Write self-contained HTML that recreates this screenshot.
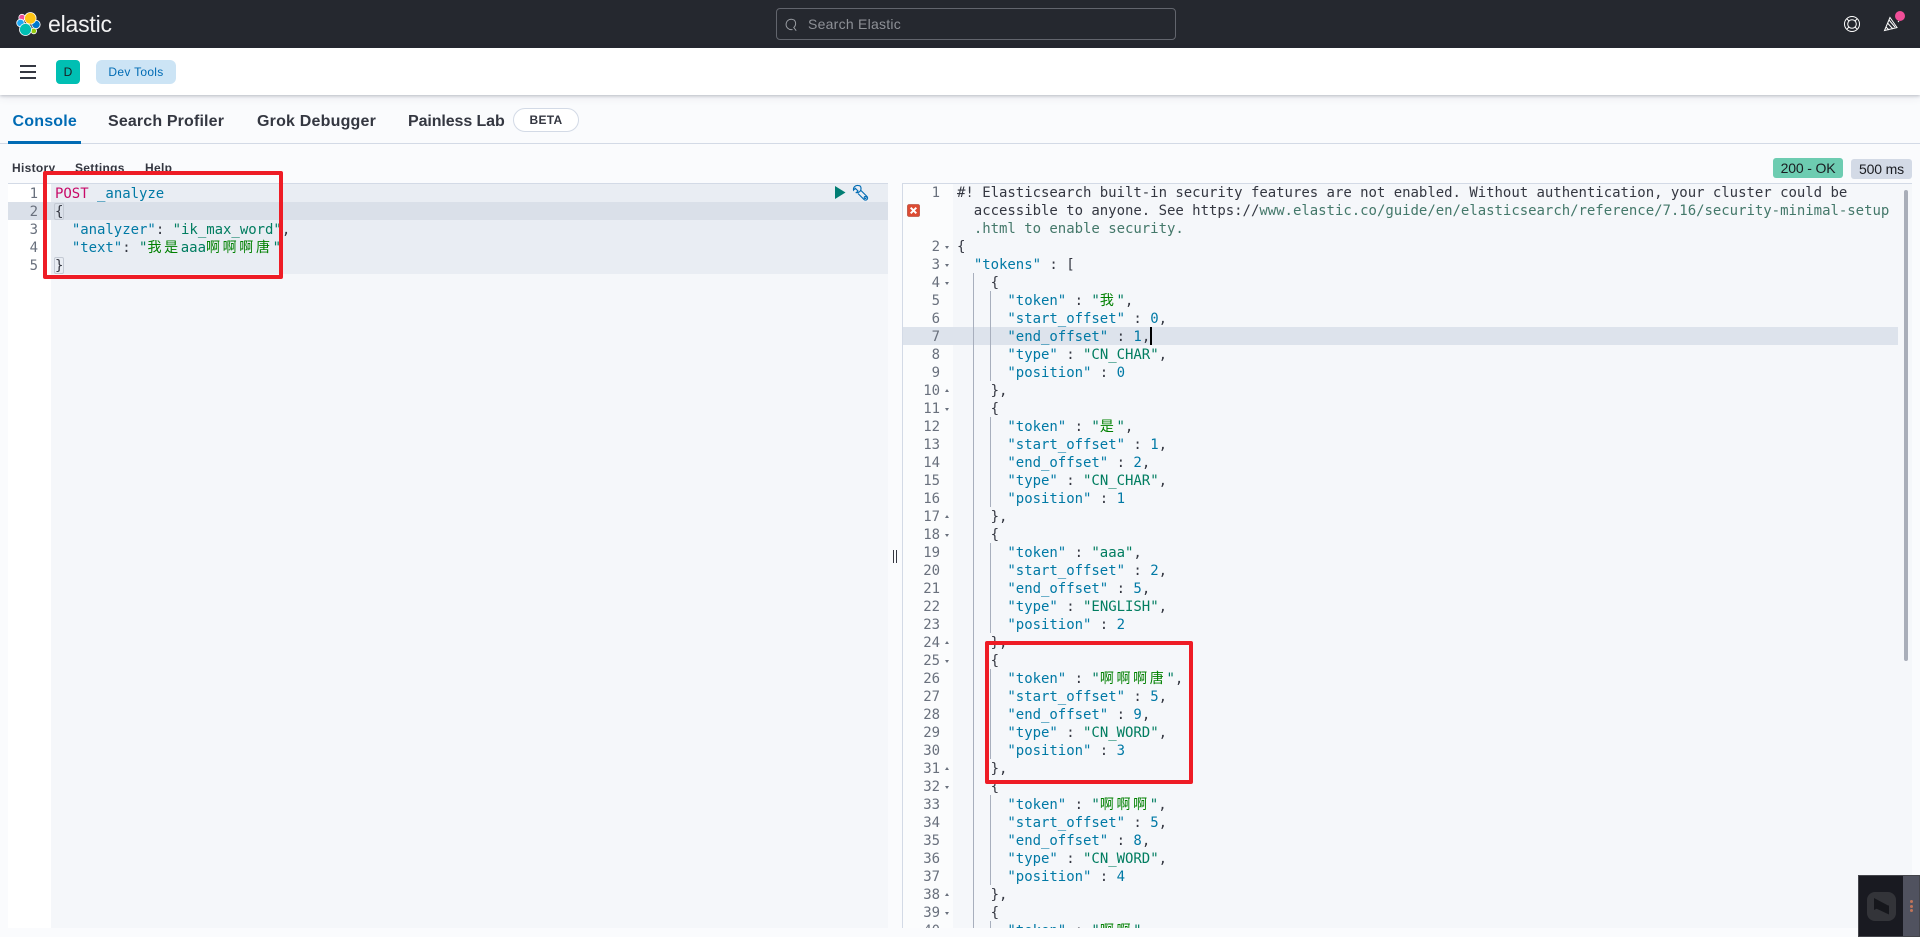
<!DOCTYPE html>
<html lang="en"><head><meta charset="utf-8"><title>Dev Tools</title>
<style>
html,body{margin:0;padding:0;width:1920px;height:937px;overflow:hidden;background:#fafbfd;font-family:"Liberation Sans","Noto Sans CJK SC",sans-serif;color:#343741}
.a{position:absolute}
#hd{left:0;top:0;width:1920px;height:48px;background:#25282f}
#nav{left:0;top:48px;width:1920px;height:47px;background:#fff;box-shadow:0 1px 3px rgba(60,70,90,.3),0 3px 8px rgba(60,70,90,.08)}
.tab{position:absolute;top:112px;font-size:16px;font-weight:bold;line-height:19px;white-space:nowrap;color:#343741}
.sub{position:absolute;top:161px;font-size:12px;font-weight:bold;line-height:15px;color:#343741;white-space:nowrap;letter-spacing:.3px}
.ed{font:14px/18px "DejaVu Sans Mono","Noto Sans CJK SC",monospace;letter-spacing:-.03px;white-space:pre;color:#343741}
.g{color:#69707d;text-align:right;white-space:normal}
.g div{height:18px;position:relative}
.d:after,.u:after{content:"";position:absolute;right:-9px;border-left:2.5px solid transparent;border-right:2.5px solid transparent}
.d:after{top:8px;border-top:3px solid #69707d}
.u:after{top:7px;border-bottom:3px solid #69707d}
.k{color:#0079a5}.s{color:#017d60}.n{color:#0079a5}.l{color:#44786a}.z{font-family:"Noto Sans CJK SC",sans-serif;color:#008000;letter-spacing:2.66px;line-height:0}
.gd{position:absolute;width:1px;background:#a8afbd}
.red{position:absolute;border:4px solid #ee1c25;border-radius:2px;box-sizing:border-box}
.bd{position:absolute;border-radius:3px;font-size:14px;text-align:center;color:#1a1c21;height:20px;line-height:20px;letter-spacing:-.15px}
</style></head><body>
<div class="a" id="hd"></div>
<svg class="a" style="left:14px;top:10px" width="30" height="28" viewBox="14 10 30 28">
<circle cx="22" cy="17.5" r="3.2" fill="#f04e98" stroke="#fff" stroke-width=".8"/>
<circle cx="20.5" cy="23" r="3.8" fill="#1ba9f5" stroke="#fff" stroke-width=".8"/>
<circle cx="36" cy="24.5" r="4.2" fill="#0077cc" stroke="#fff" stroke-width=".8"/>
<circle cx="33.8" cy="31" r="2.8" fill="#93c90e" stroke="#fff" stroke-width=".8"/>
<circle cx="30.3" cy="18.3" r="5.8" fill="#fec514" stroke="#fff" stroke-width=".8"/>
<circle cx="25.5" cy="29.5" r="6" fill="#00bfb3" stroke="#fff" stroke-width=".8"/>
</svg>
<div class="a" style="left:48px;top:11px;font-size:23px;line-height:26px;color:#f2f2f3;letter-spacing:-.2px">elastic</div>
<div class="a" style="left:776px;top:8px;width:400px;height:32px;box-sizing:border-box;border:1px solid #62656d;border-radius:4px"></div>
<svg class="a" style="left:783px;top:17px" width="16" height="16" viewBox="0 0 16 16" fill="none" stroke="#9a9da3" stroke-width="1"><path d="M9.5 12.5A5.2 5.2 0 1 1 11 3M11 2.8a5.2 5.2 0 0 1-.2 7.7l2.4 3.2"/></svg>
<div class="a" style="left:808px;top:15px;font-size:14px;line-height:18px;color:#8e9197;letter-spacing:.25px">Search Elastic</div>
<svg class="a" style="left:1843px;top:15px" width="18" height="18" viewBox="0 0 18 18" fill="none" stroke="#fff" stroke-width="1"><circle cx="9" cy="9" r="7.5"/><circle cx="9" cy="9" r="4.3"/><path d="M3.7 3.7l2.3 2.3M14.3 3.7l-2.3 2.3M3.7 14.3l2.3-2.3M14.3 14.3l-2.3-2.3"/></svg>
<svg class="a" style="left:1883px;top:15px" width="17" height="17" viewBox="0 0 17 17" fill="none" stroke="#fff" stroke-width="1"><path d="M7 2.5L1.5 15.5 14 12.5zM4.5 8l5.5 6M6 5l6 7M3 12l3 3M15 6l1 1M13 2l1-1"/></svg>
<div class="a" style="left:1895px;top:11px;width:10px;height:10px;border-radius:50%;background:#f04e98"></div>

<div class="a" id="nav"></div>
<div class="a" style="left:20px;top:65px;width:16px;height:2px;background:#343741"></div>
<div class="a" style="left:20px;top:71px;width:16px;height:2px;background:#343741"></div>
<div class="a" style="left:20px;top:77px;width:16px;height:2px;background:#343741"></div>
<div class="a" style="left:56px;top:60px;width:24px;height:24px;border-radius:4px;background:#00bfb3;text-align:center;font-size:12px;line-height:24px;color:#1a1c21">D</div>
<div class="a" style="left:96px;top:60px;width:80px;height:24px;border-radius:6px;background:#cce4f5;text-align:center;font-size:12px;line-height:24px;color:#006bb4;letter-spacing:.3px">Dev Tools</div>

<div class="tab" style="left:12.5px;color:#006bb4;letter-spacing:.2px">Console</div>
<div class="tab" style="left:108px;letter-spacing:.15px">Search Profiler</div>
<div class="tab" style="left:257px;letter-spacing:.2px">Grok Debugger</div>
<div class="tab" style="left:408px;letter-spacing:-.1px">Painless Lab</div>
<div class="a" style="left:513px;top:108px;width:66px;height:24px;box-sizing:border-box;border:1px solid #d3dae6;border-radius:12px;background:#fff;text-align:center;font-size:12px;font-weight:bold;line-height:22px;letter-spacing:.3px">BETA</div>
<div class="a" style="left:0;top:143px;width:1920px;height:1px;background:#d3dae6"></div>
<div class="a" style="left:8px;top:141px;width:73px;height:3px;background:#006bb4"></div>

<div class="sub" style="left:12px">History</div>
<div class="sub" style="left:75px">Settings</div>
<div class="sub" style="left:145px">Help</div>
<div class="bd" style="left:1773px;top:158px;width:70px;background:#6dccb1">200 - OK</div>
<div class="bd" style="left:1851px;top:159px;width:61px;background:#d3dae6">500 ms</div>

<!-- left editor -->
<div class="a" style="left:8px;top:183px;width:880px;height:745px;background:#f5f7fa;border-top:1px solid #d3dae6;box-sizing:border-box"></div>
<div class="a" style="left:8px;top:184px;width:43px;height:744px;background:#fff"></div>
<div class="a" style="left:51px;top:184px;width:837px;height:90px;background:#e9edf3"></div>
<div class="a" style="left:8px;top:202px;width:880px;height:18px;background:#dae0e9"></div>
<div class="a ed g" style="left:8px;top:185px;width:30px">
<div>1</div><div class="d">2</div><div>3</div><div>4</div><div class="u">5</div>
</div>
<div class="a ed" style="left:55px;top:185px"><span style="color:#c80a68">POST</span> <span class="k">_analyze</span>
{
  <span class="k">"analyzer"</span>: <span class="s">"ik_max_word"</span>,
  <span class="k">"text"</span>: <span class="s">"<span class="z">我是</span>aaa<span class="z">啊啊啊唐</span>"</span>
}</div>
<div class="a" style="left:54px;top:203px;width:10px;height:17px;border:1px solid #c4cad4;box-sizing:border-box;border-radius:2px"></div>
<div class="a" style="left:54px;top:257px;width:10px;height:17px;border:1px solid #c4cad4;box-sizing:border-box;border-radius:2px"></div>
<svg class="a" style="left:835px;top:186px" width="11" height="13" viewBox="0 0 11 13"><path d="M0 0L10.5 6.5 0 13z" fill="#017d73"/></svg>
<svg class="a" style="left:852px;top:184px" width="17" height="17" viewBox="0 0 17 17" fill="none" stroke="#006bb4" stroke-width="1.1"><path d="M5.8 1.2A4 4 0 0 0 1.2 5.9L3 4l2.7 2.7L4 8.3a4 4 0 0 0 4.7-4.4c0-1-.6-2-1.2-2.4z" transform="translate(.3 .3)"/><path d="M9 6.5l6 6a2 2 0 0 1-3 3l-6-6"/><circle cx="13.2" cy="13.5" r="1"/></svg>

<!-- resizer -->
<div class="a" style="left:893px;top:550px;width:1px;height:13px;background:#343741"></div>
<div class="a" style="left:896px;top:550px;width:1px;height:13px;background:#343741"></div>

<!-- right editor -->
<div class="a" style="left:902px;top:183px;width:1010px;height:745px;background:#f5f7fa;border-top:1px solid #d3dae6;border-left:1px solid #d3dae6;box-sizing:border-box"></div>
<div class="a" style="left:903px;top:184px;width:50px;height:744px;background:#fbfcfd"></div>
<div class="a" style="left:903px;top:327px;width:995px;height:18px;background:#dde3ec"></div>
<div class="a" style="left:1904px;top:190px;width:4px;height:471px;border-radius:2px;background:#a9aeb9"></div>
<svg class="a" style="left:907px;top:204px" width="13" height="13" viewBox="0 0 13 13"><rect x=".5" y=".5" width="12" height="12" rx="1.5" fill="#dd4b33" stroke="#a63320" stroke-width=".6"/><path d="M3.7 3.7l5.6 5.6M9.3 3.7L3.7 9.3" stroke="#fff" stroke-width="2"/></svg>

<div class="a" style="left:903px;top:183px;width:1009px;height:745px;overflow:hidden">
<div class="gd" style="left:70px;top:90px;height:660px"></div>
<div class="gd" style="left:87px;top:108px;height:90px"></div>
<div class="gd" style="left:87px;top:234px;height:90px"></div>
<div class="gd" style="left:87px;top:360px;height:90px"></div>
<div class="gd" style="left:87px;top:486px;height:90px"></div>
<div class="gd" style="left:87px;top:612px;height:90px"></div>
<div class="gd" style="left:87px;top:738px;height:18px"></div>
<div class="a ed g" style="left:0;top:1px;width:37px">
<div>1</div><div></div><div></div><div class="d">2</div><div class="d">3</div><div class="d">4</div><div>5</div><div>6</div><div>7</div><div>8</div><div>9</div><div class="u">10</div><div class="d">11</div><div>12</div><div>13</div><div>14</div><div>15</div><div>16</div><div class="u">17</div><div class="d">18</div><div>19</div><div>20</div><div>21</div><div>22</div><div>23</div><div class="u">24</div><div class="d">25</div><div>26</div><div>27</div><div>28</div><div>29</div><div>30</div><div class="u">31</div><div class="d">32</div><div>33</div><div>34</div><div>35</div><div>36</div><div>37</div><div class="u">38</div><div class="d">39</div><div>40</div>
</div>
<div class="a ed" style="left:54px;top:1px">#! Elasticsearch built-in security features are not enabled. Without authentication, your cluster could be
  accessible to anyone. See https://<span class="l">www.elastic.co/guide/en/elasticsearch/reference/7.16/security-minimal-setup</span>
  <span class="l">.html to enable security.</span>
{
  <span class="k">"tokens"</span> : [
    {
      <span class="k">"token"</span> : <span class="s">"<span class="z">我</span>"</span>,
      <span class="k">"start_offset"</span> : <span class="n">0</span>,
      <span class="k">"end_offset"</span> : <span class="n">1</span>,
      <span class="k">"type"</span> : <span class="s">"CN_CHAR"</span>,
      <span class="k">"position"</span> : <span class="n">0</span>
    },
    {
      <span class="k">"token"</span> : <span class="s">"<span class="z">是</span>"</span>,
      <span class="k">"start_offset"</span> : <span class="n">1</span>,
      <span class="k">"end_offset"</span> : <span class="n">2</span>,
      <span class="k">"type"</span> : <span class="s">"CN_CHAR"</span>,
      <span class="k">"position"</span> : <span class="n">1</span>
    },
    {
      <span class="k">"token"</span> : <span class="s">"aaa"</span>,
      <span class="k">"start_offset"</span> : <span class="n">2</span>,
      <span class="k">"end_offset"</span> : <span class="n">5</span>,
      <span class="k">"type"</span> : <span class="s">"ENGLISH"</span>,
      <span class="k">"position"</span> : <span class="n">2</span>
    },
    {
      <span class="k">"token"</span> : <span class="s">"<span class="z">啊啊啊唐</span>"</span>,
      <span class="k">"start_offset"</span> : <span class="n">5</span>,
      <span class="k">"end_offset"</span> : <span class="n">9</span>,
      <span class="k">"type"</span> : <span class="s">"CN_WORD"</span>,
      <span class="k">"position"</span> : <span class="n">3</span>
    },
    {
      <span class="k">"token"</span> : <span class="s">"<span class="z">啊啊啊</span>"</span>,
      <span class="k">"start_offset"</span> : <span class="n">5</span>,
      <span class="k">"end_offset"</span> : <span class="n">8</span>,
      <span class="k">"type"</span> : <span class="s">"CN_WORD"</span>,
      <span class="k">"position"</span> : <span class="n">4</span>
    },
    {
      <span class="k">"token"</span> : <span class="s">"<span class="z">啊啊</span>"</span>,</div>
<div class="a" style="left:247px;top:144px;width:2px;height:18px;background:#000"></div>
</div>

<!-- annotation boxes -->
<div class="red" style="left:43px;top:171px;width:240px;height:108px"></div>
<div class="red" style="left:985px;top:641px;width:208px;height:143px"></div>

<!-- floating widget -->
<div class="a" style="left:1858px;top:875px;width:62px;height:62px;box-sizing:border-box;border:1px solid #44454b;background:#191a21"></div>
<div class="a" style="left:1903px;top:876px;width:16px;height:60px;background:#50525f"></div>
<div class="a" style="left:1909.5px;top:900px;width:3px;height:3px;border-radius:50%;background:#c0745a"></div>
<div class="a" style="left:1909.5px;top:904.5px;width:3px;height:3px;border-radius:50%;background:#c0745a"></div>
<div class="a" style="left:1909.5px;top:909px;width:3px;height:3px;border-radius:50%;background:#c0745a"></div>
<div class="a" style="left:1867px;top:892px;width:29px;height:29px;border-radius:8px;background:#333439"></div>
<svg class="a" style="left:1873px;top:898px" width="17" height="17" viewBox="0 0 17 17"><path d="M1 0l15 8H9L1 12z" fill="#16171c"/><path d="M16 17L1 10l7-2h8z" fill="#16171c" transform="translate(0 -.5)"/></svg>
</body></html>
